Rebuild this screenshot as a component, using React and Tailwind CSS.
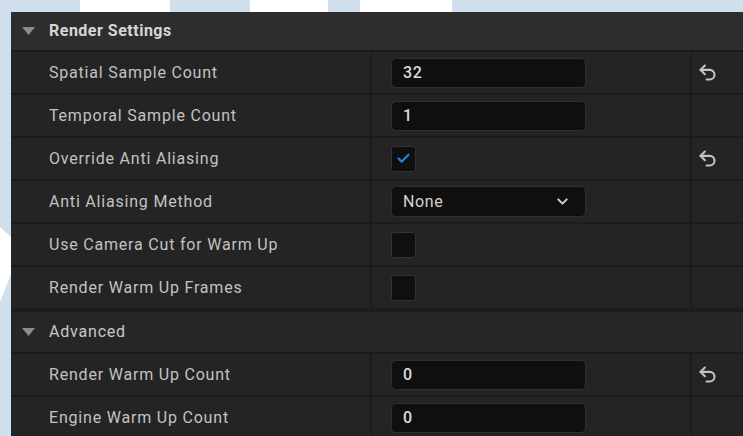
import React from 'react';
import { Undo2, ChevronDown, Check } from 'lucide-react';

const font = { fontFamily: 'Roboto, "Liberation Sans", sans-serif' };

const ResetArrow = () => (
  <Undo2 size={21} strokeWidth={2.4} className="text-[#c4c4c4]" />
);

const NumberBox = ({ value }) => (
  <div className="flex h-[30px] w-[195px] items-center rounded-[5px] border border-[#2f2f2f] bg-[#0f0f0f] pl-[11px] text-[16px] font-medium tracking-[0.6px] text-[#dcdcdc]">
    {value}
  </div>
);

const CheckBox = ({ checked }) => (
  <div className="flex h-[26px] w-[25px] items-center justify-center rounded-[3px] border border-[#333] bg-[#0f0f0f]">
    {checked && <Check size={15} strokeWidth={3.4} className="text-[#2b7fe0]" />}
  </div>
);

const Dropdown = ({ value }) => (
  <div className="flex h-[31px] w-[195px] items-center justify-between rounded-[5px] border border-[#2f2f2f] bg-[#0f0f0f] pl-[11px] pr-[14px] text-[16px] tracking-[0.6px] text-[#d4d4d4]">
    <span>{value}</span>
    <ChevronDown size={17} strokeWidth={2.8} className="text-[#cfcfcf]" />
  </div>
);

const Row = ({ label, children, reset }) => (
  <div className="flex h-[43px] shrink-0 border-t-2 border-[#1b1b1b] bg-[#242424]">
    <div className="flex w-[359px] items-center pl-[38px] text-[16px] tracking-[0.8px] text-[#c2c2c2]">{label}</div>
    <div className="flex w-[320px] items-center border-l-2 border-[#1c1c1c] pl-[19px]">{children}</div>
    <div className="flex flex-1 items-center border-l-2 border-[#1c1c1c] pl-[5px]">
      {reset && <ResetArrow />}
    </div>
  </div>
);

const Section = ({ title, bold }) => (
  <div
    className={`flex shrink-0 items-center gap-[14px] pl-[11px] text-[16px] ${
      bold
        ? 'h-[38px] bg-[#2d2d2d] font-bold tracking-[0.5px] text-[#d6d6d6]'
        : 'h-[44px] border-t-4 border-[#1d1d1d] bg-[#262626] tracking-[0.8px] text-[#c8c8c8]'
    }`}
  >
    <svg width="13" height="8" viewBox="0 0 13 8" className="shrink-0">
      <polygon points="0,0 13,0 6.5,8" fill="#8c8c8c" />
    </svg>
    <span>{title}</span>
  </div>
);

export default function App() {
  return (
    <div className="flex h-[436px] w-[743px] flex-col overflow-hidden bg-[#cfdfee]" style={font}>
      {/* page backdrop above the panel */}
      <div className="flex h-[12px] shrink-0">
        <div className="w-[80px] bg-[#cfdfee]" />
        <div className="w-[90px] bg-white" />
        <div className="w-[80px] bg-[#cfdfee]" />
        <div className="w-[78px] bg-white" />
        <div className="w-[32px] bg-[#cfdfee]" />
        <div className="w-[92px] bg-white" />
        <div className="flex-1 bg-[#cfdfee]" />
      </div>
      <div className="flex min-h-0 flex-1">
        <div className="w-[11px] shrink-0">
          <svg width="11" height="424" viewBox="0 0 11 424">
            <rect width="11" height="424" fill="#cfdfee" />
            <polygon points="0,215 11,225 11,262 0,290" fill="#ffffff" />
          </svg>
        </div>
        <div className="flex flex-1 flex-col">
          <Section title="Render Settings" bold />
          <Row label="Spatial Sample Count" reset>
            <NumberBox value="32" />
          </Row>
          <Row label="Temporal Sample Count">
            <NumberBox value="1" />
          </Row>
          <Row label="Override Anti Aliasing" reset>
            <CheckBox checked />
          </Row>
          <Row label="Anti Aliasing Method">
            <Dropdown value="None" />
          </Row>
          <Row label="Use Camera Cut for Warm Up">
            <CheckBox />
          </Row>
          <Row label="Render Warm Up Frames">
            <CheckBox />
          </Row>
          <Section title="Advanced" />
          <Row label="Render Warm Up Count" reset>
            <NumberBox value="0" />
          </Row>
          <Row label="Engine Warm Up Count">
            <NumberBox value="0" />
          </Row>
        </div>
      </div>
    </div>
  );
}
